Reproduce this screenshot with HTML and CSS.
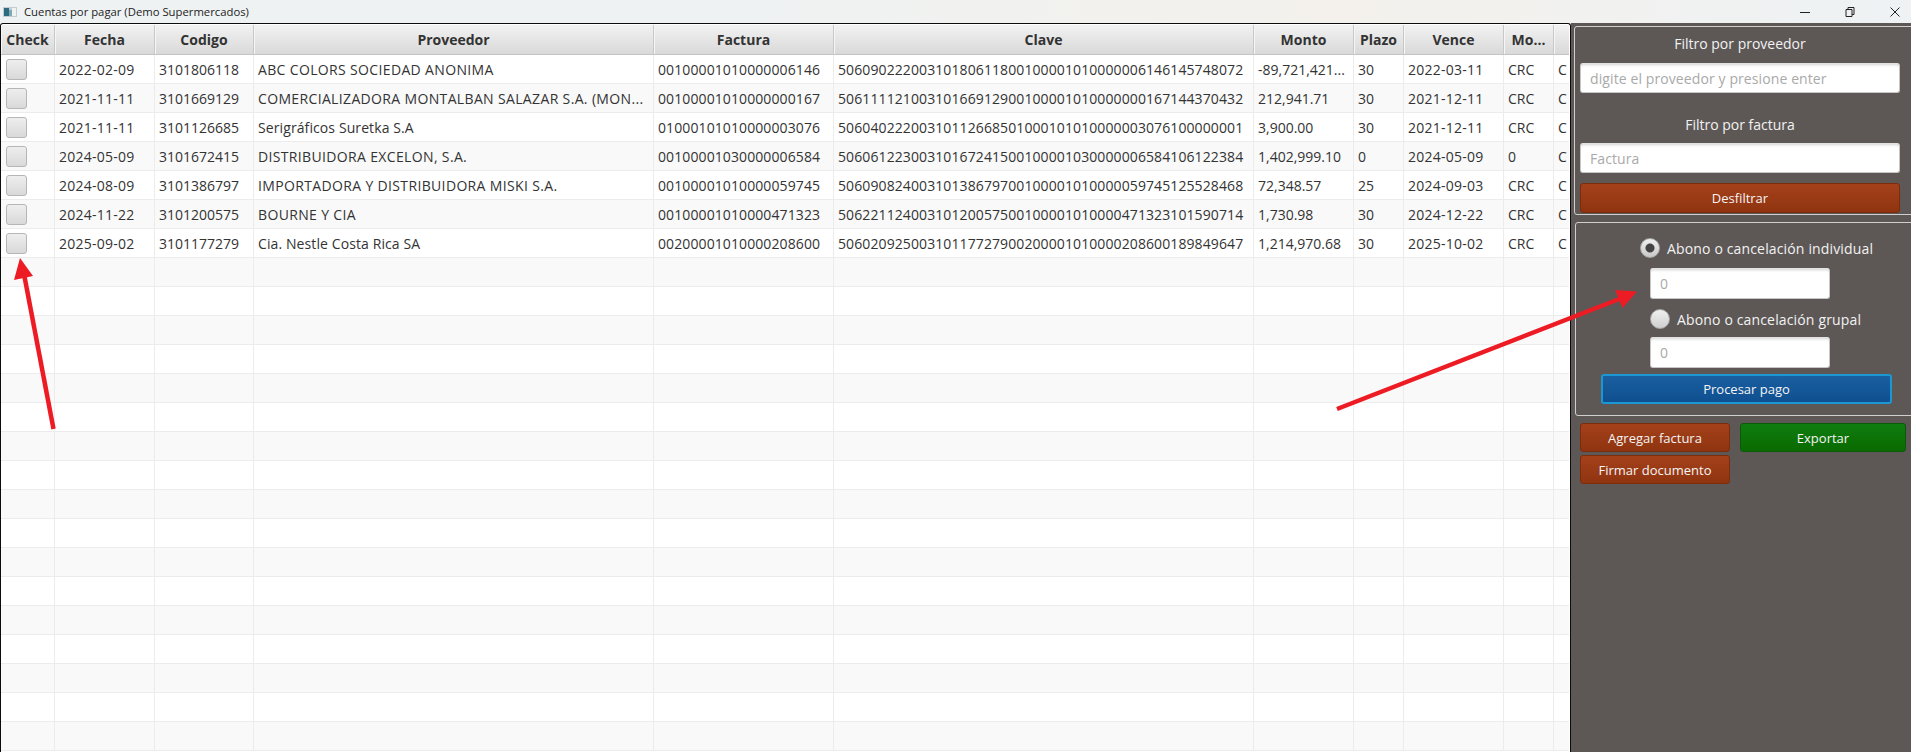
FILE: index.html
```html
<!DOCTYPE html>
<html lang="es">
<head>
<meta charset="utf-8">
<title>Cuentas por pagar (Demo Supermercados)</title>
<link rel="stylesheet" href="styles.css">
</head>
<body>
<div class="app">
  <header class="titlebar">
    <svg class="appicon" width="14" height="10" viewBox="0 0 14 10"><rect width="14" height="10" fill="#c3ccd0"/><rect x="1" y="1" width="5" height="8" fill="#2b6a80"/><rect x="6" y="3" width="3" height="6" fill="#7fa9b5"/><rect x="9" y="1" width="4" height="8" fill="#eef2f3"/></svg>
    <span class="title">Cuentas por pagar (Demo Supermercados)</span>
    <div class="winctl">
      <svg width="10" height="10" viewBox="0 0 10 10"><path d="M0 5.5h10" stroke="#222" fill="none"/></svg>
      <svg width="10" height="10" viewBox="0 0 10 10"><path d="M1 2.5h6v7H1zM3 2.5V.5h6v7H7" stroke="#222" fill="none"/></svg>
      <svg width="10" height="10" viewBox="0 0 10 10"><path d="M.5.5l9 9M9.5.5l-9 9" stroke="#222" fill="none"/></svg>
    </div>
  </header>
  <main class="content">
    <section class="tablewrap">
      <table class="grid">
        <colgroup>
          <col class="c-check"><col class="c-fecha"><col class="c-codigo"><col class="c-prov"><col class="c-fact"><col class="c-clave"><col class="c-monto"><col class="c-plazo"><col class="c-vence"><col class="c-mo"><col class="c-last">
        </colgroup>
        <thead>
          <tr><th>Check</th><th>Fecha</th><th>Codigo</th><th>Proveedor</th><th>Factura</th><th>Clave</th><th>Monto</th><th>Plazo</th><th>Vence</th><th>Mo...</th><th></th></tr>
        </thead>
        <tbody>
          <tr><td><span class="check"></span></td><td>2022-02-09</td><td>3101806118</td><td class="caps">ABC COLORS SOCIEDAD ANONIMA</td><td>00100001010000006146</td><td>50609022200310180611800100001010000006146145748072</td><td>-89,721,421...</td><td>30</td><td>2022-03-11</td><td>CRC</td><td>C</td></tr>
          <tr><td><span class="check"></span></td><td>2021-11-11</td><td>3101669129</td><td class="caps">COMERCIALIZADORA MONTALBAN SALAZAR S.A. (MON...</td><td>00100001010000000167</td><td>50611112100310166912900100001010000000167144370432</td><td>212,941.71</td><td>30</td><td>2021-12-11</td><td>CRC</td><td>C</td></tr>
          <tr><td><span class="check"></span></td><td>2021-11-11</td><td>3101126685</td><td>Serigráficos Suretka S.A</td><td>01000101010000003076</td><td>50604022200310112668501000101010000003076100000001</td><td>3,900.00</td><td>30</td><td>2021-12-11</td><td>CRC</td><td>C</td></tr>
          <tr><td><span class="check"></span></td><td>2024-05-09</td><td>3101672415</td><td class="caps">DISTRIBUIDORA EXCELON, S.A.</td><td>00100001030000006584</td><td>50606122300310167241500100001030000006584106122384</td><td>1,402,999.10</td><td>0</td><td>2024-05-09</td><td>0</td><td>C</td></tr>
          <tr><td><span class="check"></span></td><td>2024-08-09</td><td>3101386797</td><td class="caps">IMPORTADORA Y DISTRIBUIDORA MISKI S.A.</td><td>00100001010000059745</td><td>50609082400310138679700100001010000059745125528468</td><td>72,348.57</td><td>25</td><td>2024-09-03</td><td>CRC</td><td>C</td></tr>
          <tr><td><span class="check"></span></td><td>2024-11-22</td><td>3101200575</td><td class="caps">BOURNE Y CIA</td><td>00100001010000471323</td><td>50622112400310120057500100001010000471323101590714</td><td>1,730.98</td><td>30</td><td>2024-12-22</td><td>CRC</td><td>C</td></tr>
          <tr><td><span class="check"></span></td><td>2025-09-02</td><td>3101177279</td><td>Cia. Nestle Costa Rica SA</td><td>00200001010000208600</td><td>50602092500310117727900200001010000208600189849647</td><td>1,214,970.68</td><td>30</td><td>2025-10-02</td><td>CRC</td><td>C</td></tr>
          <tr><td></td><td></td><td></td><td></td><td></td><td></td><td></td><td></td><td></td><td></td><td></td></tr>
          <tr><td></td><td></td><td></td><td></td><td></td><td></td><td></td><td></td><td></td><td></td><td></td></tr>
          <tr><td></td><td></td><td></td><td></td><td></td><td></td><td></td><td></td><td></td><td></td><td></td></tr>
          <tr><td></td><td></td><td></td><td></td><td></td><td></td><td></td><td></td><td></td><td></td><td></td></tr>
          <tr><td></td><td></td><td></td><td></td><td></td><td></td><td></td><td></td><td></td><td></td><td></td></tr>
          <tr><td></td><td></td><td></td><td></td><td></td><td></td><td></td><td></td><td></td><td></td><td></td></tr>
          <tr><td></td><td></td><td></td><td></td><td></td><td></td><td></td><td></td><td></td><td></td><td></td></tr>
          <tr><td></td><td></td><td></td><td></td><td></td><td></td><td></td><td></td><td></td><td></td><td></td></tr>
          <tr><td></td><td></td><td></td><td></td><td></td><td></td><td></td><td></td><td></td><td></td><td></td></tr>
          <tr><td></td><td></td><td></td><td></td><td></td><td></td><td></td><td></td><td></td><td></td><td></td></tr>
          <tr><td></td><td></td><td></td><td></td><td></td><td></td><td></td><td></td><td></td><td></td><td></td></tr>
          <tr><td></td><td></td><td></td><td></td><td></td><td></td><td></td><td></td><td></td><td></td><td></td></tr>
          <tr><td></td><td></td><td></td><td></td><td></td><td></td><td></td><td></td><td></td><td></td><td></td></tr>
          <tr><td></td><td></td><td></td><td></td><td></td><td></td><td></td><td></td><td></td><td></td><td></td></tr>
          <tr><td></td><td></td><td></td><td></td><td></td><td></td><td></td><td></td><td></td><td></td><td></td></tr>
          <tr><td></td><td></td><td></td><td></td><td></td><td></td><td></td><td></td><td></td><td></td><td></td></tr>
          <tr><td></td><td></td><td></td><td></td><td></td><td></td><td></td><td></td><td></td><td></td><td></td></tr>
        </tbody>
      </table>
    </section>
    <aside class="panel">
      <div class="box filters">
        <div class="filter-label first">Filtro por proveedor</div>
        <input class="field wide" type="text" placeholder="digite el proveedor y presione enter">
        <div class="filter-label">Filtro por factura</div>
        <input class="field wide" type="text" placeholder="Factura">
        <button class="btn orange wide gap-top">Desfiltrar</button>
      </div>
      <div class="box payment">
        <label class="radio-row row-one"><span class="radio on"></span><span>Abono o cancelación individual</span></label>
        <input class="field amount" type="text" placeholder="0">
        <label class="radio-row row-two"><span class="radio"></span><span>Abono o cancelación grupal</span></label>
        <input class="field amount amount-two" type="text" placeholder="0">
        <button class="btn blue process">Procesar pago</button>
      </div>
      <div class="actions">
        <button class="btn orange">Agregar factura</button>
        <button class="btn green">Exportar</button>
        <button class="btn orange">Firmar documento</button>
      </div>
    </aside>
  </main>
  <svg class="arrows" width="1911" height="752" viewBox="0 0 1911 752">
    <path d="M53.5 429L24 274" stroke="#ed1c24" stroke-width="4.5" fill="none"/>
    <path d="M20 258L14 280L33 276Z" fill="#ed1c24"/>
    <path d="M1337 409L1622 298" stroke="#ed1c24" stroke-width="4.5" fill="none"/>
    <path d="M1637 291.5L1615 290L1622.5 308Z" fill="#ed1c24"/>
  </svg>
</div>
</body>
</html>
```
FILE: styles.css
```css
* { box-sizing: border-box; }
html, body { margin: 0; padding: 0; height: 100%; overflow: hidden; }
body { font-family: "Open Sans", "Liberation Sans", sans-serif; font-size: 14px; color: #333; }
.app { position: relative; width: 1911px; height: 752px; display: flex; flex-direction: column; overflow: hidden; }

.titlebar { height: 23px; flex: none; display: flex; align-items: center; padding-left: 3px; background: linear-gradient(90deg, #eef2f3 0%, #eff2f2 40%, #f4f1ec 70%, #eef2f4 100%); }
.appicon { flex: none; margin-right: 7px; }
.title { font-size: 11.3px; color: #222; white-space: nowrap; }
.winctl { margin-left: auto; display: flex; gap: 35px; padding-right: 11px; }

.content { flex: 1; display: flex; min-height: 0; }
.tablewrap { width: 1571px; flex: none; border: 1px solid #0c0c0c; border-bottom: 0; border-top-left-radius: 3px; border-top-right-radius: 3px; background: #fff; overflow: hidden; padding-right: 1px; padding-top: 1px; }
.grid { border-collapse: separate; border-spacing: 0; table-layout: fixed; width: 1568px; }
.c-check { width: 54px; }
.c-fecha { width: 100px; }
.c-codigo { width: 99px; }
.c-prov { width: 400px; }
.c-fact { width: 180px; }
.c-clave { width: 420px; }
.c-monto { width: 100px; }
.c-plazo { width: 50px; }
.c-vence { width: 100px; }
.c-mo { width: 50px; }
.c-last { width: 15px; }

.grid th { height: 30px; padding: 0; font-size: 14px; font-weight: 700; color: #333; text-align: center; background: linear-gradient(180deg, #f2f2f2 0%, #d9d9d9 100%); border-right: 1px solid #c8c8c8; border-bottom: 1px solid #c4c4c4; box-shadow: inset 1px 0 0 #f6f6f6; white-space: nowrap; overflow: hidden; }
.grid td { height: 29px; padding: 0 0 0 4px; font-size: 14px; color: #333; border-right: 1px solid #ececec; border-bottom: 1px solid #ececec; white-space: nowrap; overflow: hidden; background: #fff; }
.grid tbody tr:nth-child(even) td { background: #f9f9f9; }
.grid td:last-child, .grid th:last-child { border-right: 0; }
.grid td:nth-child(2), .grid td:nth-child(9) { letter-spacing: 0.25px; }
.grid td:nth-child(4), .grid td:nth-child(5), .grid td:nth-child(6) { letter-spacing: 0.1px; }
.grid td.caps { letter-spacing: 0.35px; }

.check { display: block; width: 21px; height: 21px; margin-left: 1px; border: 1px solid #b6b6b6; border-radius: 3px; background: linear-gradient(180deg, #eeeeee 0%, #d9d9d9 100%); }

.panel { flex: 1; min-width: 0; background: #5d5856; padding: 3px 0 0 3px; overflow: hidden; color: #f2f2f2; }
.box { border: 1px solid #cfcfcf; border-radius: 3px; width: 345px; display: flex; flex-direction: column; }
.filters { height: 189px; padding: 0 0 0 5px; }
.filter-label { width: 320px; height: 37px; margin-top: 13px; display: flex; align-items: center; justify-content: center; font-size: 14px; }
.filter-label.first { height: 36px; margin-top: 0; padding-bottom: 3px; }
.field { display: block; height: 30px; border: 1px solid #c6c6c6; border-top-color: #e2e2e2; border-radius: 3px; background: #fff; box-shadow: inset 0 3px 3px -2px #d4d4d4; padding: 0 9px; font-family: inherit; font-size: 14px; letter-spacing: 0.1px; color: #333; outline: none; }
.field::placeholder { color: #a9a9a9; opacity: 1; }
.wide { width: 320px; flex: none; }
.btn { display: block; height: 30px; border-radius: 3px; padding: 0; font-family: inherit; font-size: 13px; color: #f4f4f4; cursor: pointer; }
.orange { background: linear-gradient(180deg, #a4411b 0%, #8f3410 100%); border: 1px solid #7c2c0d; }
.blue { background: linear-gradient(180deg, #1a5fa0 0%, #0f4f8f 100%); border: 2px solid #1b98d4; }
.green { background: linear-gradient(180deg, #0f7d0f 0%, #0a6a00 100%); border: 1px solid #0a5a0a; }
.gap-top { margin-top: 10px; }

.payment { height: 194px; margin: 7px 0 0 1px; padding: 15px 0 0 0; }
.radio-row { display: flex; align-items: center; height: 20px; font-size: 14px; letter-spacing: 0.15px; gap: 7px; white-space: nowrap; }
.row-one { margin-left: 64px; }
.row-two { margin: 10px 0 0 74px; }
.radio { width: 20px; height: 20px; border-radius: 50%; flex: none; border: 1px solid #a8a8a8; background: linear-gradient(180deg, #f0f0f0 0%, #cfcfcf 100%); }
.radio.on { background: radial-gradient(circle, #444 0 4px, transparent 5px), linear-gradient(180deg, #f0f0f0 0%, #c8c8c8 100%); }
.amount { width: 180px; height: 31px; margin: 10px 0 0 74px; }
.amount-two { margin-top: 8px; }
.process { width: 291px; margin: 6px 0 0 25px; }

.actions { display: grid; grid-template-columns: 150px 166px; column-gap: 10px; row-gap: 3px; grid-auto-rows: 29px; margin: 7px 0 0 6px; }
.actions .btn { height: 29px; }

.arrows { position: absolute; left: 0; top: 0; pointer-events: none; }
```
